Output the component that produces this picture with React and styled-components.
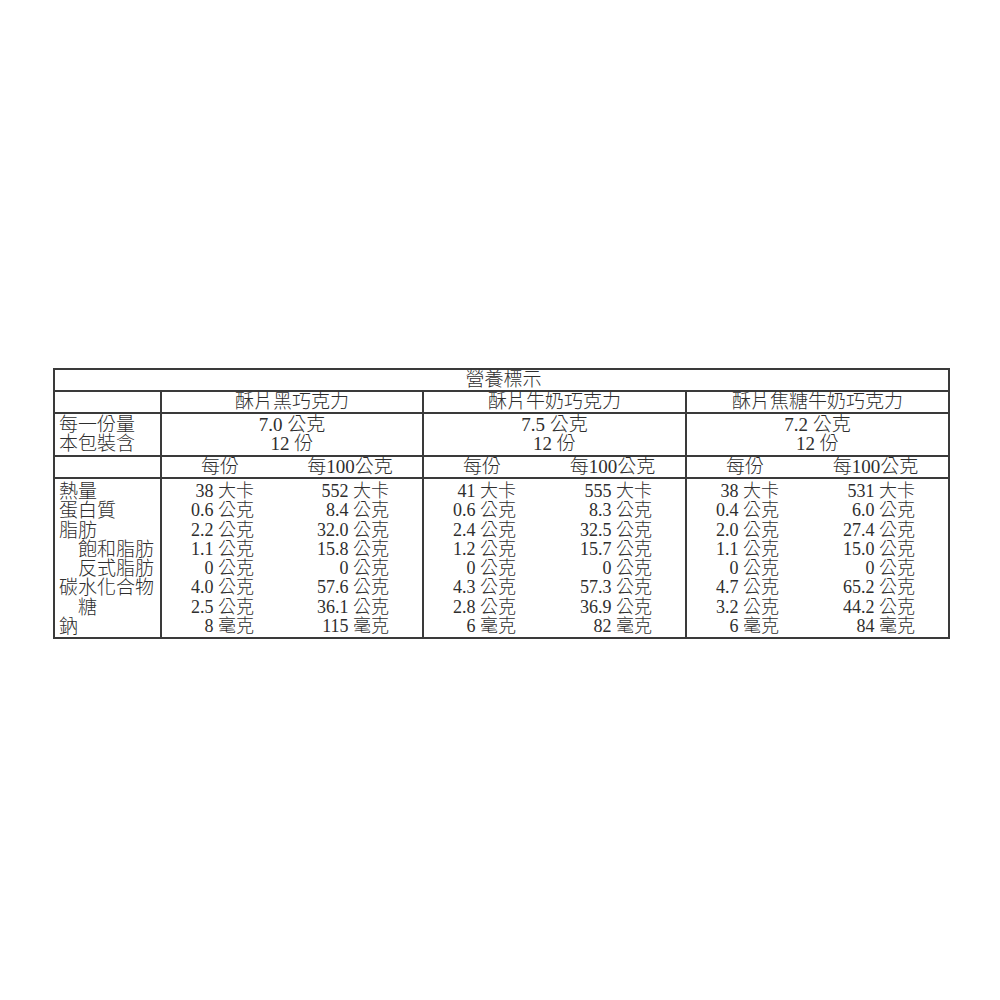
import React from 'react'
import styled, { createGlobalStyle } from 'styled-components'

const nutrients = [
  { label: '熱量' },
  { label: '蛋白質' },
  { label: '脂肪' },
  { label: '飽和脂肪', indent: true },
  { label: '反式脂肪', indent: true },
  { label: '碳水化合物' },
  { label: '糖', indent: true },
  { label: '鈉' },
]

const products = [
  {
    name: '酥片黑巧克力',
    serving: '7.0 公克',
    count: '12 份',
    values: [
      ['38 大卡', '552 大卡'],
      ['0.6 公克', '8.4 公克'],
      ['2.2 公克', '32.0 公克'],
      ['1.1 公克', '15.8 公克'],
      ['0 公克', '0 公克'],
      ['4.0 公克', '57.6 公克'],
      ['2.5 公克', '36.1 公克'],
      ['8 毫克', '115 毫克'],
    ],
  },
  {
    name: '酥片牛奶巧克力',
    serving: '7.5 公克',
    count: '12 份',
    values: [
      ['41 大卡', '555 大卡'],
      ['0.6 公克', '8.3 公克'],
      ['2.4 公克', '32.5 公克'],
      ['1.2 公克', '15.7 公克'],
      ['0 公克', '0 公克'],
      ['4.3 公克', '57.3 公克'],
      ['2.8 公克', '36.9 公克'],
      ['6 毫克', '82 毫克'],
    ],
  },
  {
    name: '酥片焦糖牛奶巧克力',
    serving: '7.2 公克',
    count: '12 份',
    values: [
      ['38 大卡', '531 大卡'],
      ['0.4 公克', '6.0 公克'],
      ['2.0 公克', '27.4 公克'],
      ['1.1 公克', '15.0 公克'],
      ['0 公克', '0 公克'],
      ['4.7 公克', '65.2 公克'],
      ['3.2 公克', '44.2 公克'],
      ['6 毫克', '84 毫克'],
    ],
  },
]

export default function App() {
  return (
    <Page>
      <GlobalStyle />
      <Table>
        <TitleCell>營養標示</TitleCell>

        <NameCell />
        {products.map((p) => (
          <NameCell key={p.name} $center>
            {p.name}
          </NameCell>
        ))}

        <ServingCell>
          <div>每一份量</div>
          <div>本包裝含</div>
        </ServingCell>
        {products.map((p) => (
          <ServingCell key={p.name} $center>
            <div>{p.serving}</div>
            <div>{p.count}</div>
          </ServingCell>
        ))}

        <NameCell />
        {products.map((p) => (
          <HeadCell key={p.name}>
            <span>每份</span>
            <span>每100公克</span>
          </HeadCell>
        ))}

        <LabelCell>
          {nutrients.map((n) => (
            <Label key={n.label} $indent={n.indent}>
              {n.label}
            </Label>
          ))}
        </LabelCell>
        {products.map((p) => (
          <BodyCell key={p.name}>
            {p.values.map(([per, per100], i) => (
              <React.Fragment key={i}>
                <Value $pad={24}>{per}</Value>
                <Value $pad={33}>{per100}</Value>
              </React.Fragment>
            ))}
          </BodyCell>
        ))}
      </Table>
    </Page>
  )
}

const GlobalStyle = createGlobalStyle`
  html, body {
    margin: 0;
    background: #fff;
  }
`

const Page = styled.div`
  padding: 368px 0 0 53px;
  font-family: 'Liberation Serif', 'Noto Sans CJK TC', serif;
  font-weight: 300;
  color: #2e2e2e;
`

const Table = styled.div`
  display: grid;
  grid-template-columns: 107px 262px 263px 263px;
  width: max-content;
  border-top: 2px solid #3a3a3a;
  border-left: 2px solid #3a3a3a;
`

const Cell = styled.div`
  box-sizing: border-box;
  border-right: 2px solid #3a3a3a;
  border-bottom: 2px solid #3a3a3a;
  font-size: 19px;
  padding-left: ${(p) => (p.$center ? 0 : 4)}px;
  text-align: ${(p) => (p.$center ? 'center' : 'left')};
`

const TitleCell = styled(Cell)`
  grid-column: 1 / -1;
  height: 22px;
  line-height: 20px;
  text-align: center;
`

const NameCell = styled(Cell)`
  height: 22px;
  line-height: 20px;
`

const ServingCell = styled(Cell)`
  height: 43px;
  padding-top: 1px;
  line-height: 19.25px;
`

const HeadCell = styled(Cell)`
  height: 22px;
  line-height: 20px;
  padding-left: 0;
  display: grid;
  grid-template-columns: 116px 1fr;
  text-align: center;
`

const LabelCell = styled(Cell)`
  height: 160px;
  padding-top: 3px;
  line-height: 19.25px;
`

const Label = styled.div`
  padding-left: ${(p) => (p.$indent ? '19px' : '0')};
  white-space: nowrap;
`

const BodyCell = styled(Cell)`
  height: 160px;
  padding: 3px 0 0;
  display: grid;
  grid-template-columns: 116px 1fr;
  grid-auto-rows: 19.25px;
  font-size: 18px;
  line-height: 19.25px;
`

const Value = styled.div`
  text-align: right;
  padding-right: ${(p) => p.$pad}px;
  white-space: nowrap;
`
